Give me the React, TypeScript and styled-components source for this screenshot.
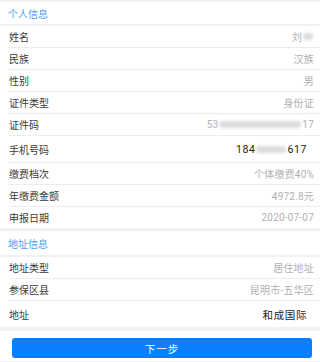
import React from "react"
import styled, { createGlobalStyle } from "styled-components"

const GlobalStyle = createGlobalStyle`
  html, body {
    margin: 0;
    padding: 0;
    background: #f3f3f3;
    font-family: Roboto, "Noto Sans CJK SC", "Noto Sans", sans-serif;
  }
`

const Page = styled.div`
  display: flex;
  flex-direction: column;
  width: 100%;
  padding-top: 2px;
`

const Band = styled.div<{ $h: number }>`
  height: ${(p) => p.$h}px;
  background: #f1f1f1;
`

const SectionTitle = styled.div<{ $h: number }>`
  display: flex;
  align-items: center;
  height: ${(p) => p.$h}px;
  padding-left: 8px;
  background: #fff;
  color: #4ba0f5;
  font-size: 10px;
`

const List = styled.div`
  background: #fff;
`

const Row = styled.div<{ $tall?: boolean; $last?: boolean }>`
  display: flex;
  align-items: center;
  justify-content: space-between;
  height: ${(p) => (p.$tall ? 26 : 21)}px;
  margin-left: 9px;
  padding-right: 6px;
  border-bottom: ${(p) => (p.$last ? "none" : "1px solid #ececec")};
`

const Label = styled.span`
  font-size: 10px;
  color: #3a3a3a;
`

const Value = styled.span<{ $strong?: boolean }>`
  display: flex;
  align-items: center;
  font-size: ${(p) => (p.$strong ? "10.5px" : "10px")};
  color: ${(p) => (p.$strong ? "#222" : "#b0b0b0")};
  padding-right: ${(p) => (p.$strong ? "7px" : "0")};
  letter-spacing: ${(p) => (p.$strong ? "0.6px" : "0.2px")};
`

const Blur = styled.span<{ $w: number }>`
  display: inline-block;
  width: ${(p) => p.$w}px;
  height: 7px;
  margin: 0 1px;
  border-radius: 4px;
  background: #dcdcdc;
  filter: blur(1.5px);
`

const Footer = styled.div`
  background: #fff;
  padding: 7px 8px 3px 12px;
`

const NextButton = styled.button`
  display: block;
  width: 100%;
  height: 20px;
  border: none;
  border-radius: 3px;
  background: #0a80ff;
  color: #fff;
  font-family: inherit;
  font-size: 10.5px;
  letter-spacing: 1px;
`

type Item = { label: string; value: React.ReactNode; tall?: boolean; strong?: boolean }

const personal: Item[] = [
  { label: "姓名", value: <>刘<Blur $w={10} /></> },
  { label: "民族", value: "汉族" },
  { label: "性别", value: "男" },
  { label: "证件类型", value: "身份证" },
  { label: "证件码", value: <>53<Blur $w={82} />17</> },
  { label: "手机号码", value: <>184<Blur $w={30} />617</>, tall: true, strong: true },
  { label: "缴费档次", value: "个体缴费40%" },
  { label: "年缴费金额", value: "4972.8元" },
  { label: "申报日期", value: "2020-07-07" },
]

const address: Item[] = [
  { label: "地址类型", value: "居住地址" },
  { label: "参保区县", value: "昆明市-五华区" },
  { label: "地址", value: "和成国际", tall: true, strong: true },
]

const renderRows = (items: Item[]) =>
  items.map((it, i) => (
    <Row key={it.label} $tall={it.tall} $last={i === items.length - 1}>
      <Label>{it.label}</Label>
      <Value $strong={it.strong}>{it.value}</Value>
    </Row>
  ))

export default function App() {
  return (
    <>
      <GlobalStyle />
      <Page>
        <SectionTitle $h={22}>个人信息</SectionTitle>
        <Band $h={2} />
        <List>{renderRows(personal)}</List>
        <Band $h={3} />
        <SectionTitle $h={24}>地址信息</SectionTitle>
        <Band $h={2} />
        <List>{renderRows(address)}</List>
        <Band $h={4} />
        <Footer>
          <NextButton>下一步</NextButton>
        </Footer>
      </Page>
    </>
  )
}
